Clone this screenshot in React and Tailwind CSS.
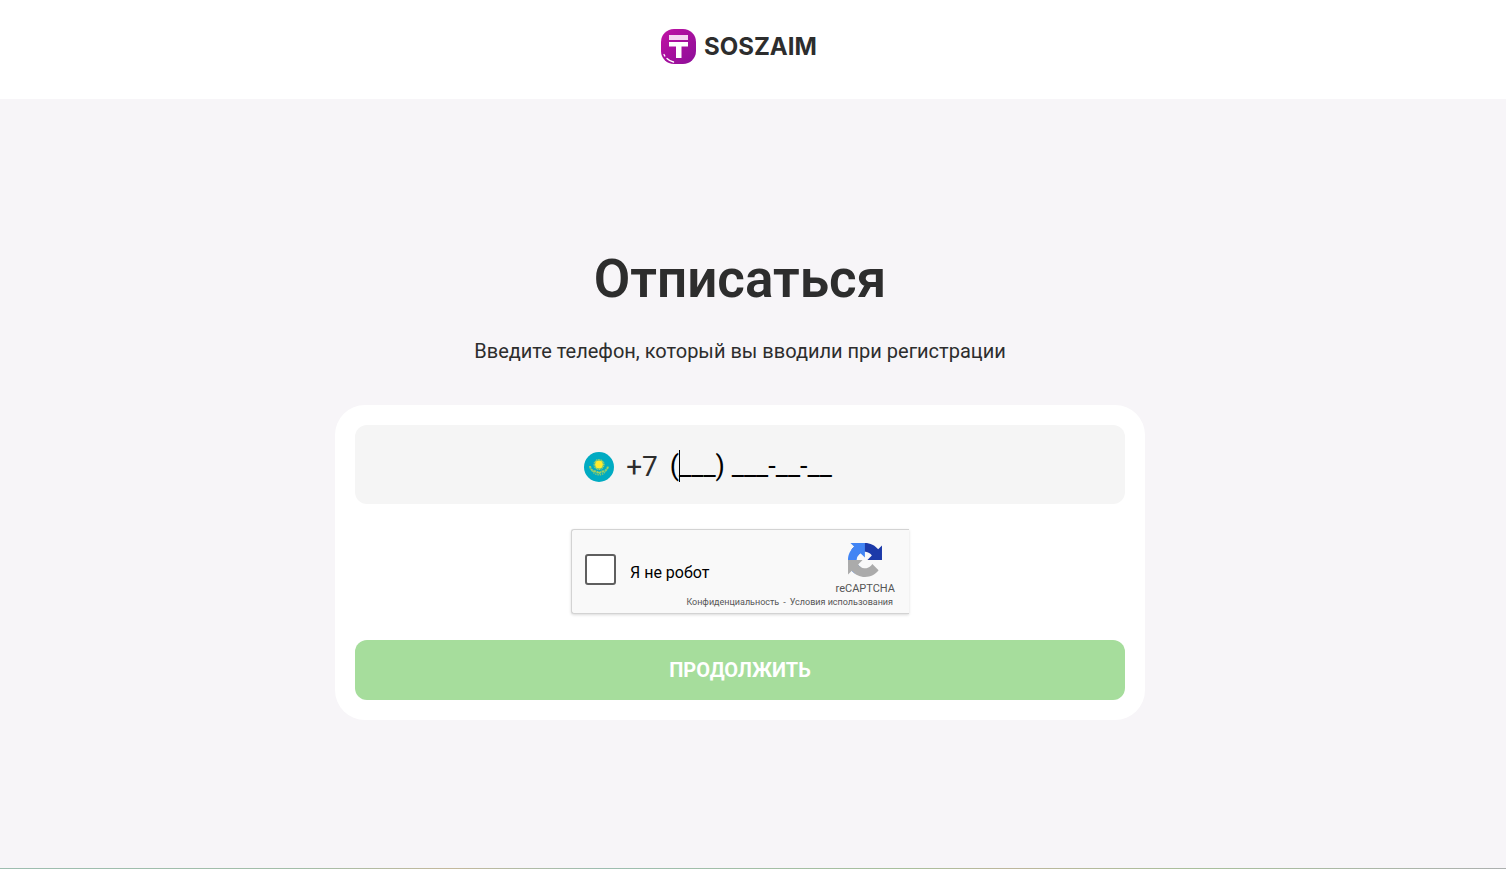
import React, { useState } from 'react';

function Logo() {
    return (
        <a href="#" className="flex w-[158px] items-center gap-2">
            <svg width="35" height="35" viewBox="0 0 35 35" aria-hidden="true">
                <defs>
                    <linearGradient id="logoFill" x1="0" y1="0" x2="1" y2="1">
                        <stop offset="0" stopColor="#c012a4" />
                        <stop offset="1" stopColor="#8c0f98" />
                    </linearGradient>
                </defs>
                <rect width="35" height="35" rx="13" fill="url(#logoFill)" />
                <path d="M8 6h19v5H8z" fill="#f6d6f2" />
                <path d="M8 13h19v4.500h-6.500V29h-5.500V17.500H8z" fill="#fff" />
                <path d="M3 25.500l.8 1.500M6 29.500c2 2 4 3 6.500 3.500" fill="none" stroke="#fff" strokeWidth="1.400" strokeLinecap="round" />
            </svg>
            <span className="font-[Inter,sans-serif] text-2xl font-bold leading-8">SOSZAIM</span>
        </a>
    );
}

function KzFlag() {
    return (
        <svg width="30" height="30" viewBox="0 0 30 30" role="img" aria-label="Казахстан">
            <circle cx="15" cy="15" r="15" fill="#00abc2" />
            <circle cx="15" cy="12.500" r="4.800" fill="none" stroke="#a9d35c" strokeWidth="1.500" strokeDasharray="1 .6" />
            <circle cx="15" cy="12.500" r="3.900" fill="#ffec2d" />
            <path d="M6 14c.3 3 2 5 5.500 5.500 1.500.2 2.500 1 3.500 2 1-1 2-1.800 3.500-2 3.500-.5 5.200-2.500 5.500-5.500" fill="none" stroke="#9fd05f" strokeWidth="2" strokeDasharray="2.500 .6" />
            <path d="M8 18.500c1.500 2.800 4 4.300 7 4.300s5.500-1.500 7-4.300" fill="none" stroke="#7cc67c" strokeWidth="1.500" strokeDasharray="1.500 .8" />
        </svg>
    );
}

function RecaptchaLogo() {
    return (
        <svg width="34" height="34" viewBox="0 0 64 64" aria-hidden="true">
            <path fill="#1c3aa9" d="M64 31.955c0-.46-.011-.917-.032-1.373V4.600l-7.183 7.183C50.906 4.588 41.963 0 31.948 0 21.526 0 12.267 4.968 6.431 12.662l11.774 11.898a15.600 15.600 0 0 1 4.768-5.350c2.056-1.604 4.969-2.916 8.975-2.916.484 0 .858.057 1.132.163 4.963.392 9.265 3.131 11.798 7.106l-8.334 8.334L64 31.955" />
            <path fill="#4285f4" d="M31.862.004c-.46 0-.917.011-1.372.033H4.572l7.167 7.166C4.560 13.083 0 22.029 0 32.045c0 10.423 4.957 19.682 12.634 25.519l11.872-11.775a15.600 15.600 0 0 1-5.338-4.769c-1.600-2.056-2.910-4.969-2.910-8.975 0-.484.057-.858.163-1.132.391-4.963 3.124-9.265 7.090-11.798l8.316 8.334z" />
            <path fill="#ababab" d="M.004 32.045c0 .46.011.917.033 1.373v25.921l7.167-7.167C13.083 59.350 22.029 64 32.045 64c10.423 0 19.682-4.968 25.519-12.662L45.790 39.440a15.600 15.600 0 0 1-4.769 5.350c-2.056 1.604-4.969 2.916-8.975 2.916-.484 0-.858-.057-1.132-.163-4.963-.392-9.265-3.131-11.798-7.106l8.334-8.334z" />
        </svg>
    );
}

function Recaptcha() {
    const [checked, setChecked] = useState(false);

    return (
        <div className="flex h-[85px] w-[338px] justify-between rounded-l-[3px] border border-r-0 border-[#d3d3d3] bg-[#f9f9f9] shadow-[0_1px_3px_rgba(0,0,0,0.15)]">
            <label htmlFor="robot" className="flex h-[78px] items-center gap-[14px] pl-[13px] text-base text-black">
                <input
                    id="robot"
                    type="checkbox"
                    checked={checked}
                    onChange={(e) => setChecked(e.target.checked)}
                    className="size-[31px] appearance-none rounded-[3px] border-2 border-[#5f5f5f] bg-white checked:bg-[#4285f4]"
                />
                <span className="whitespace-nowrap pt-2">Я не робот</span>
            </label>
            <div className="-ml-8 flex flex-col items-end pr-[14px] pt-[13px] text-[#555555]">
                <div className="flex flex-col items-center">
                    <RecaptchaLogo />
                    <span className="mt-1 text-[11px] leading-[15px]">reCAPTCHA</span>
                </div>
                <div className="flex gap-1 whitespace-nowrap pr-[2px] text-[9px] leading-3">
                    <a href="#">Конфиденциальность</a>
                    <span>-</span>
                    <a href="#">Условия использования</a>
                </div>
            </div>
        </div>
    );
}

export default function App() {
    const [phone, setPhone] = useState('(___) ___-__-__');

    return (
        <div className="flex min-h-screen flex-col bg-[#f7f5f8] font-[Roboto,sans-serif] text-[#2d2d2d]">
            {/* Header */}
            <header className="flex h-[99px] justify-center bg-white pr-[26px] pt-[29px]">
                <div>
                    <Logo />
                </div>
            </header>

            {/* Unsubscribe form */}
            <main className="flex flex-1 flex-col items-center pr-[26px] pt-[148px]">
                <h1 className="text-[53px] font-semibold leading-[64px]">Отписаться</h1>
                <p className="mt-7 text-xl leading-6">Введите телефон, который вы вводили при регистрации</p>

                <form
                    onSubmit={(e) => e.preventDefault()}
                    className="mt-[42px] flex w-full max-w-[810px] flex-col items-center rounded-[30px] bg-white p-5"
                >
                    <div className="flex h-[79px] w-full items-center justify-center rounded-xl bg-[#f5f5f5] pt-1 text-[28px]">
                        <KzFlag />
                        <label htmlFor="phone" className="ml-3">+7</label>
                        <div className="relative ml-3">
                            <input
                                id="phone"
                                type="tel"
                                value={phone}
                                onChange={(e) => setPhone(e.target.value)}
                                className="block w-[226px] bg-transparent text-[27px] text-black outline-none"
                            />
                            {/* Text cursor */}
                            <span className="absolute left-[9px] top-1 h-8 w-px bg-black" />
                        </div>
                    </div>

                    <div className="mt-[25px]">
                        <Recaptcha />
                    </div>

                    <button type="submit" className="mt-[26px] h-[60px] w-full rounded-xl bg-[#a6dd9c] text-xl font-bold text-white">
                        ПРОДОЛЖИТЬ
                    </button>
                </form>
            </main>

            <div className="h-px bg-[linear-gradient(to_right,#9dbdb0,#a3bda8_20%,#c4b89c_30%,#9dbdb0_40%,#a8bf9c_60%,#bdb69c_67%,#a8bf9c_80%,#adb0b0)]" />
        </div>
    );
}
